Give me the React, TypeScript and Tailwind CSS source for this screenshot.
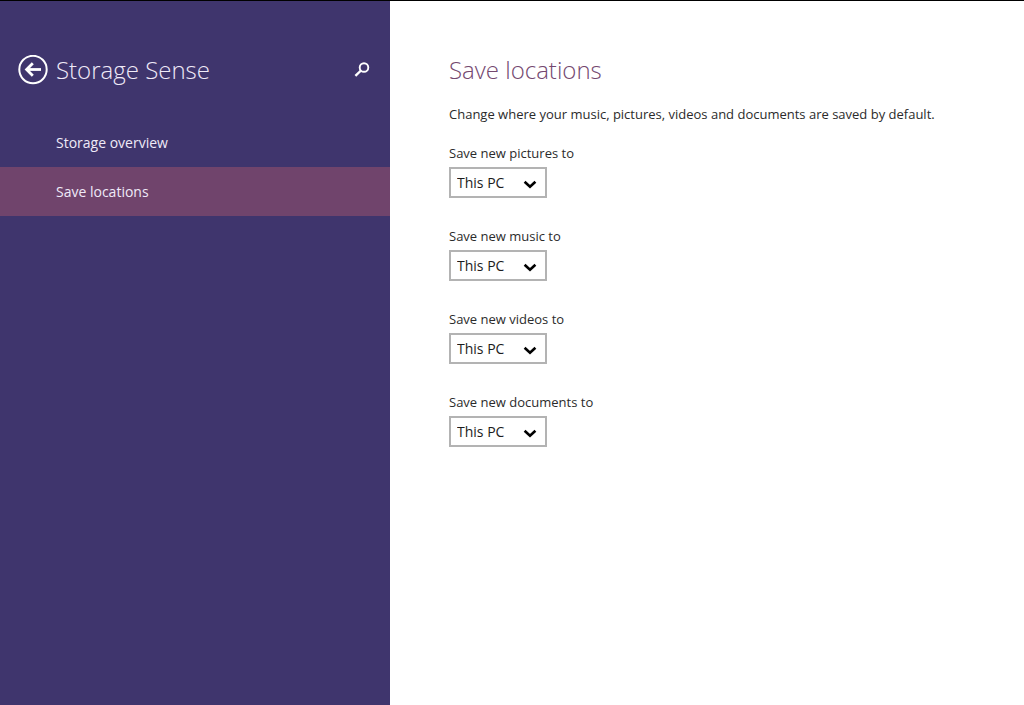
const pages = [
  { id: "overview", label: "Storage overview", current: false },
  { id: "locations", label: "Save locations", current: true },
];

const libraries = ["pictures", "music", "videos", "documents"];

function BackIcon() {
  return (
    <svg viewBox="0 0 30 30" className="size-[30px]" fill="none" stroke="currentColor" aria-hidden="true">
      <circle cx="15" cy="14.5" r="13.7" strokeWidth="2" />
      <path d="M8.5 14.5H23" strokeWidth="2.8" />
      <path d="M14.8 8.3 8.6 14.5l6.2 6.2" strokeWidth="2.8" />
    </svg>
  );
}

function SearchIcon() {
  return (
    <svg viewBox="0 0 16 16" className="size-4" fill="none" stroke="currentColor" aria-hidden="true">
      <circle cx="10" cy="5.5" r="4.3" strokeWidth="1.9" />
      <path d="M7 8.5 1.4 13.9" strokeWidth="2.4" />
    </svg>
  );
}

function SaveLocation({ library }: { library: string }) {
  const id = `save-${library}`;
  return (
    <div className="flex flex-col items-start gap-1">
      <label htmlFor={id} className="text-[13px] leading-5">
        Save new {library} to
      </label>
      <div className="relative">
        <select
          id={id}
          className="block h-[31px] w-[98px] appearance-none border-2 border-[#b3b3b3] bg-white pt-px pr-7 pl-[6px] text-sm text-[#1c1c1c]"
        >
          <option>This PC</option>
        </select>
        <svg
          viewBox="0 0 14 10"
          className="pointer-events-none absolute top-3 right-[10px] h-[10px] w-[14px] text-black"
          fill="none"
          stroke="currentColor"
          aria-hidden="true"
        >
          <path d="M1.6 2.8 7 7.8l5.4-5" strokeWidth="2.6" />
        </svg>
      </div>
    </div>
  );
}

export default function App() {
  return (
    <div className="flex min-h-screen border-t border-black bg-white font-['Open_Sans','Noto_Sans',sans-serif] text-[#2b2b2b]">
      <aside className="w-[390px] shrink-0 bg-[#3f356d] text-[#efeaf8]">
        <header className="flex items-center pt-[49px] pr-5 pb-7 pl-[18px]">
          <button type="button" aria-label="Back" className="text-white">
            <BackIcon />
          </button>
          <h1 className="ml-2 grow text-2xl leading-10 font-light">Storage Sense</h1>
          <button type="button" aria-label="Search" className="text-white">
            <SearchIcon />
          </button>
        </header>
        <nav>
          {pages.map((page) => (
            <a
              key={page.id}
              href={`#${page.id}`}
              aria-current={page.current ? "page" : undefined}
              className={
                page.current
                  ? "flex h-[49px] items-center bg-[#70446c] pl-14 text-sm"
                  : "flex h-[49px] items-center pl-14 text-sm"
              }
            >
              {page.label}
            </a>
          ))}
        </nav>
      </aside>
      <main className="grow pt-[49px] pr-8 pl-[59px]">
        <h2 className="text-2xl leading-10 font-light text-[#74486f]">Save locations</h2>
        <p className="mt-[14px] text-[13px] leading-5">
          Change where your music, pictures, videos and documents are saved by default.
        </p>
        <form className="mt-[19px] flex flex-col gap-7">
          {libraries.map((library) => (
            <SaveLocation key={library} library={library} />
          ))}
        </form>
      </main>
    </div>
  );
}
